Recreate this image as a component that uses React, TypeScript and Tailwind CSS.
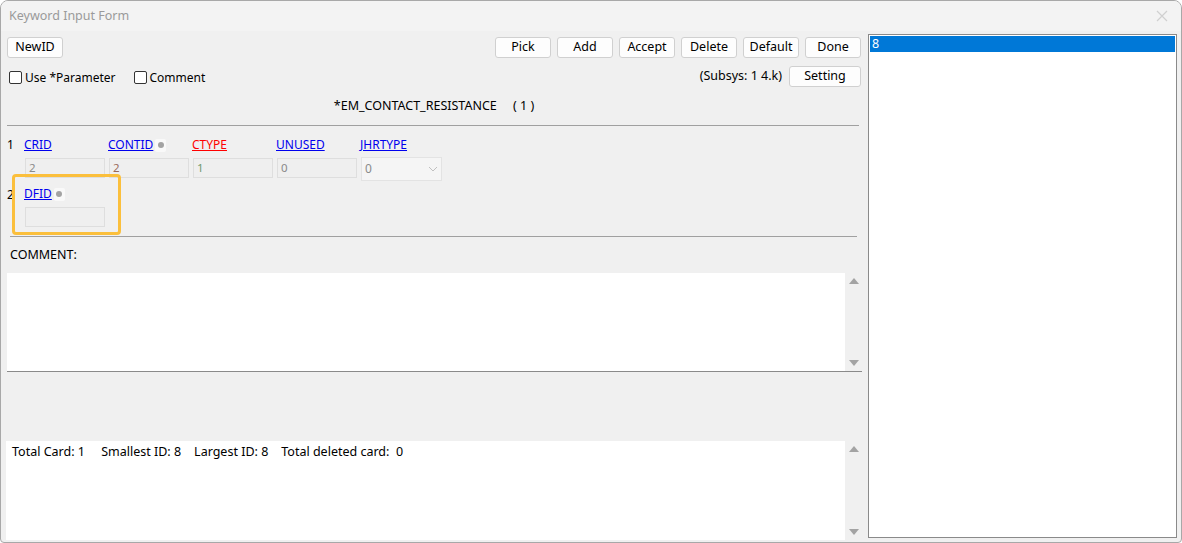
import React from 'react';

const font = { fontFamily: '"Noto Sans", "Open Sans", sans-serif' };

const Btn: React.FC<{ label: string; w?: string }> = ({ label, w = 'w-[56px]' }) => (
  <button className={`${w} h-[21px] bg-[#fdfdfd] border border-[#d0d0d0] rounded-[3px] text-[12.5px] text-black leading-none`}>
    {label}
  </button>
);

const Dot: React.FC = () => (
  <span className="ml-[2px] w-[11px] h-[13px] bg-[#f9f9f9] rounded-[2px] flex items-center justify-center">
    <span className="w-[6px] h-[6px] rounded-full bg-[#a3a3a3]" />
  </span>
);

const Check: React.FC<{ label: string }> = ({ label }) => (
  <label className="flex items-center gap-[3px] text-[12px] text-black">
    <span className="w-[13px] h-[13px] border border-[#333] rounded-[2px] bg-white" />
    {label}
  </label>
);

const Field: React.FC<{ label: string; color?: string; value: string; valueColor?: string; dot?: boolean }> = ({
  label,
  color = 'text-[#0000ee] decoration-[#0000ee]',
  value,
  valueColor = 'text-[#8a8a8a]',
  dot,
}) => (
  <div className="w-[84px] flex flex-col">
    <div className="h-[16px] flex items-center">
      <span className={`underline text-[12px] ${color}`}>{label}</span>
      {dot && <Dot />}
    </div>
    <div className={`mt-[5px] ml-[1px] w-[80px] h-[20px] bg-[#efefef] border border-[#dedede] text-[11.5px] px-[3px] leading-[17px] ${valueColor}`}>
      {value}
    </div>
  </div>
);

const Scroll: React.FC = () => (
  <div className="w-[17px] h-full bg-[#f0f0f0] flex flex-col items-center justify-between py-[5px]">
    <span className="w-0 h-0 border-l-[5px] border-r-[5px] border-b-[6px] border-l-transparent border-r-transparent border-b-[#a3a3a3]" />
    <span className="w-0 h-0 border-l-[5px] border-r-[5px] border-t-[6px] border-l-transparent border-r-transparent border-t-[#a3a3a3]" />
  </div>
);

export default function App() {
  return (
    <div style={font} className="w-[1182px] h-[543px] bg-[#f0f0f0] border border-[#a8a8a8] rounded-t-[8px] rounded-b-[4px] flex flex-col overflow-hidden">
      {/* title bar */}
      <div className="h-[30px] bg-[#f3f3f3] flex items-center justify-between px-[8px] shrink-0">
        <span className="text-[12.5px] text-[#9a9a9a]">Keyword Input Form</span>
        <svg width="12" height="12" viewBox="0 0 12 12" className="mr-[5px]">
          <path d="M1 1 L11 11 M11 1 L1 11" stroke="#d0d0d0" strokeWidth="1.2" />
        </svg>
      </div>

      <div className="flex-1 flex min-h-0">
        {/* left column */}
        <div className="w-[865px] flex flex-col pl-[3px] pr-[5px]">
          <div className="h-[27px] pt-[6px] flex items-start justify-between pl-[3px]">
            <Btn label="NewID" />
            <div className="flex gap-[6px]">
              {['Pick', 'Add', 'Accept', 'Delete', 'Default', 'Done'].map((b) => (
                <Btn key={b} label={b} />
              ))}
            </div>
          </div>
          <div className="h-[30px] mt-[8px] flex items-start justify-between">
            <div className="flex items-center gap-[18px] pl-[5px] h-[21px] mt-[1px]">
              <Check label="Use *Parameter" />
              <Check label="Comment" />
            </div>
            <div className="flex items-center gap-[7px]">
              <span className="text-[12.5px] text-black">(Subsys: 1 4.k)</span>
              <Btn label="Setting" w="w-[72px]" />
            </div>
          </div>
          <div className="h-[20px] flex items-center justify-center text-[12.5px] text-black pl-[3px] whitespace-pre">
            {'*EM_CONTACT_RESISTANCE     ( 1 )'}
          </div>
          <div className="mt-[9px] ml-[3px] mr-[2px] h-px bg-[#a0a0a0]" />

          {/* card 1 */}
          <div className="mt-[11px] flex pl-[3px]">
            <span className="w-[17px] text-[12px] text-black leading-[16px]">1</span>
            <Field label="CRID" value="2" />
            <Field label="CONTID" value="2" valueColor="text-[#9a6a5a]" dot />
            <Field label="CTYPE" value="1" color="text-[#ff0000] decoration-[#ff0000]" valueColor="text-[#6f9a6f]" />
            <Field label="UNUSED" value="0" />
            <div className="w-[84px] flex flex-col">
              <div className="h-[16px] flex items-center">
                <span className="underline text-[12px] text-[#0000ee]">JHRTYPE</span>
              </div>
              <div className="mt-[4px] ml-[1px] w-[81px] h-[24px] bg-[#f5f5f5] border border-[#e3e3e3] flex items-center justify-between px-[3px] text-[12px] text-[#8a8a8a]">
                <span>0</span>
                <svg width="10" height="6" viewBox="0 0 10 6">
                  <path d="M1 1 L5 5 L9 1" fill="none" stroke="#c0c0c0" strokeWidth="1" />
                </svg>
              </div>
            </div>
          </div>

          {/* card 2 */}
          <div className="-mt-[7px] flex pl-[3px]">
            <span className="w-[17px] text-[12px] text-black leading-[16px] mt-[13px]">2</span>
            <div className="-ml-[12px] w-[109px] h-[61px] border-[3px] border-[#fbbf3c] rounded-[4px] pl-[9px] pt-[9px]">
              <div className="h-[16px] flex items-center">
                <span className="underline text-[12px] text-[#0000ee]">DFID</span>
                <Dot />
              </div>
              <div className="mt-[5px] ml-[1px] w-[80px] h-[20px] bg-[#efefef] border border-[#dedede]" />
            </div>
          </div>

          <div className="mt-[1px] ml-[6px] mr-[4px] h-px bg-[#a0a0a0]" />
          <div className="h-[36px] flex items-center text-[12.5px] text-black pl-[6px]">COMMENT:</div>

          <div className="ml-[3px] -mr-[1px] h-[99px] bg-white border-b border-[#8a8a8a] flex justify-end">
            <Scroll />
          </div>

          <div className="h-[69px]" />

          <div className="ml-[2px] -mr-[1px] h-[99px] bg-white flex justify-between">
            <span className="text-[12.5px] text-black pl-[6px] pt-[2px] whitespace-pre">
              {'Total Card: 1     Smallest ID: 8    Largest ID: 8    Total deleted card:  0'}
            </span>
            <Scroll />
          </div>
        </div>

        {/* right list */}
        <div className="ml-[2px] mt-[3px] mb-[4px] w-[309px] bg-white border border-[#8a8a8a] p-[1px]">
          <div className="h-[16px] bg-[#0078d7] text-white text-[12.5px] leading-[16px] pl-[2px]">8</div>
        </div>
      </div>
    </div>
  );
}
